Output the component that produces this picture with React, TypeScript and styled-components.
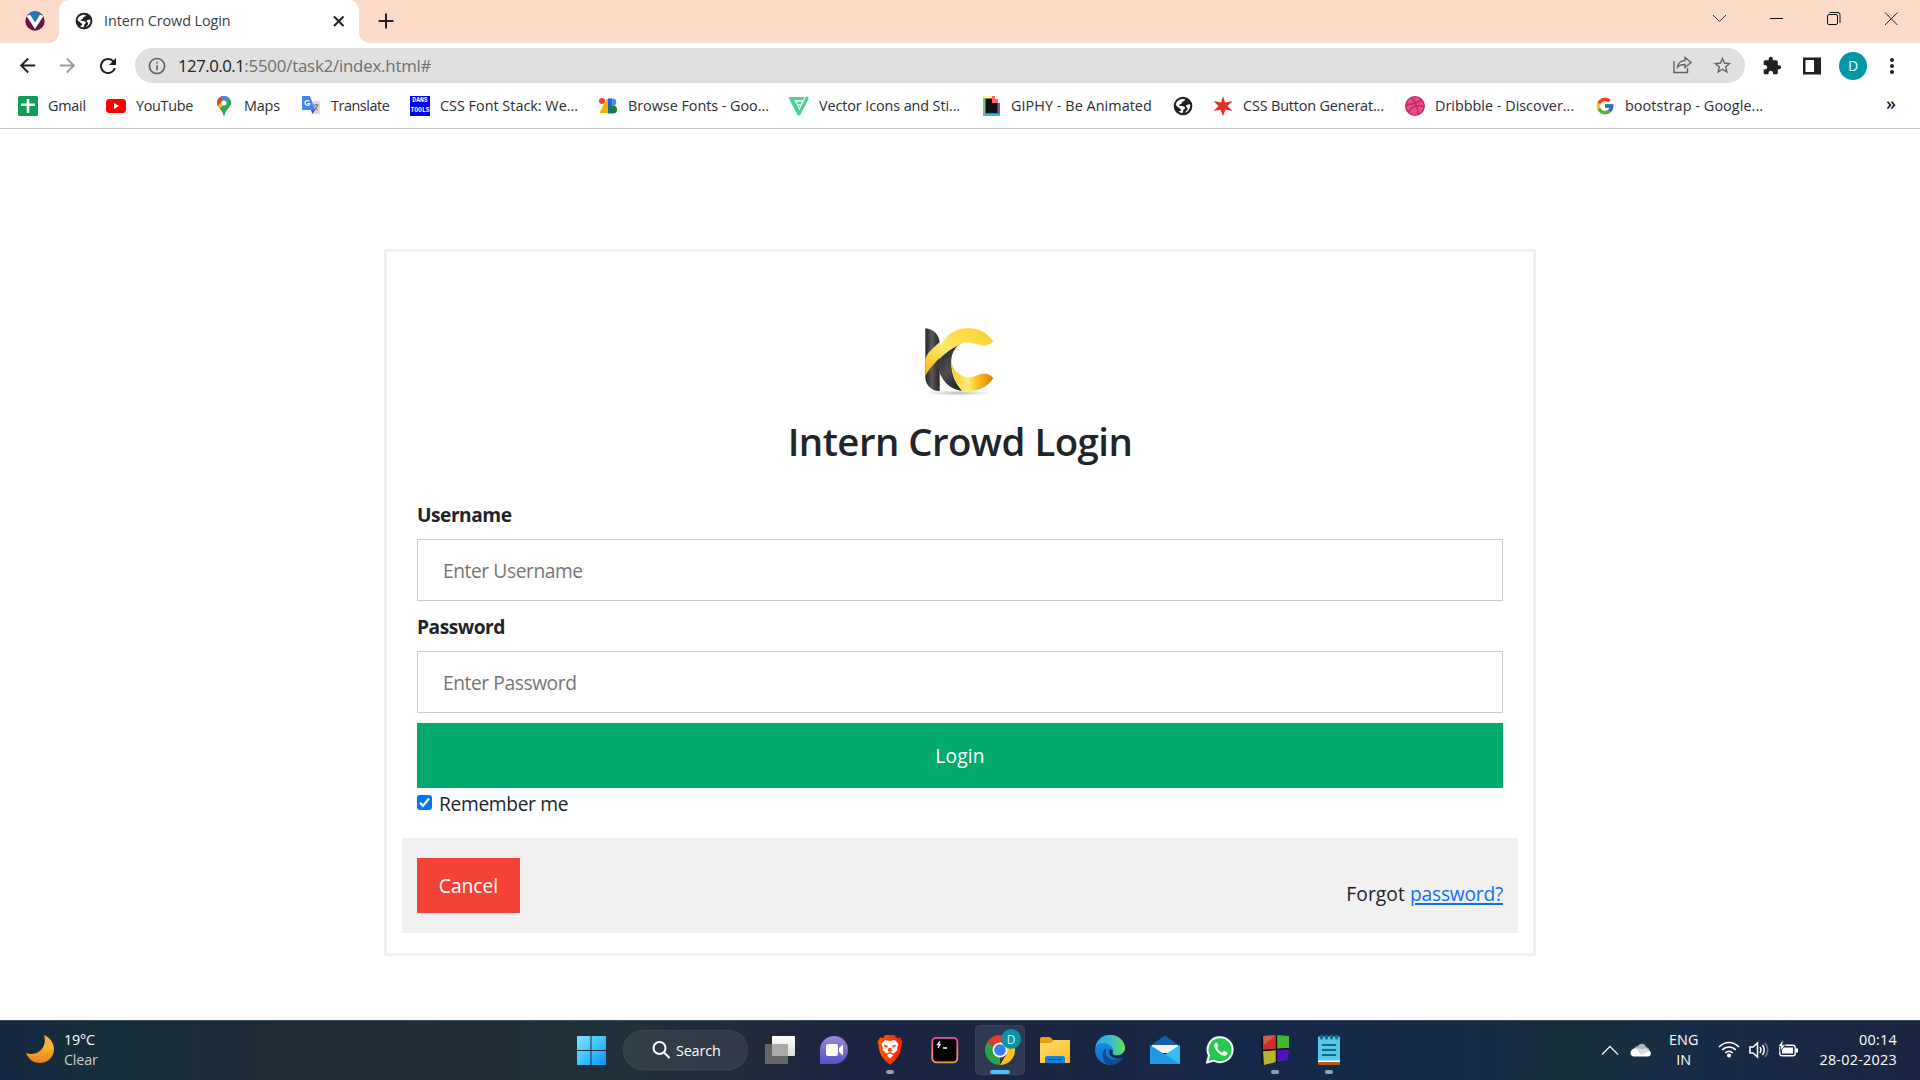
import React from "react";
import styled, { createGlobalStyle } from "styled-components";
import { MdRefresh, MdExtension, MdStarOutline, MdInfoOutline, MdArrowBack, MdArrowForward, MdMoreVert } from "react-icons/md";
import { FcGoogle } from "react-icons/fc";

const Global = createGlobalStyle`
  * { box-sizing: border-box; }
  body { margin: 0; background: #fff; color: #212529; font-family: "Open Sans", "Noto Sans", sans-serif; overflow: hidden; }
  svg { display: block; flex: none; }
`;

const Screen = styled.div`
  width: 1920px;
  height: 1080px;
  display: flex;
  flex-direction: column;
  background: #fff;
`;

/* ---------- browser ---------- */
const TabStrip = styled.header`
  height: 43px;
  display: flex;
  align-items: stretch;
  background: #fddbc8;
`;
const PinnedTab = styled.div`
  width: 59px;
  padding: 11px 0 0 25px;
`;
const ActiveTab = styled.div`
  position: relative;
  width: 300px;
  padding: 0 12px 1px 16px;
  display: flex;
  align-items: center;
  background: #fff;
  border-radius: 10px 10px 0 0;
  &::before, &::after {
    content: "";
    position: absolute;
    bottom: 0;
    width: 10px;
    height: 10px;
  }
  &::before { left: -10px; background: radial-gradient(circle at 0 0, transparent 9.5px, #fff 10px); }
  &::after { right: -10px; background: radial-gradient(circle at 100% 0, transparent 9.5px, #fff 10px); }
`;
const TabTitle = styled.span`
  flex: 1;
  margin: -1px 0 0 11px;
  font-size: 14.4px;
  line-height: 20px;
  letter-spacing: -0.1px;
  color: #3c4043;
`;
const NewTab = styled.div`
  flex: 1;
  padding: 13px 0 0 19px;
`;
const WindowButtons = styled.div`
  display: flex;
  gap: 35px;
  padding: 7px 17px 0 0;
`;

const Toolbar = styled.div`
  height: 47px;
  display: flex;
  align-items: center;
  padding: 0 16px 2px;
  color: #202124;
`;
const NavButtons = styled.div`
  width: 119px;
  display: flex;
  gap: 17px;
`;
const AddressBar = styled.div`
  width: 1610px;
  height: 35px;
  display: flex;
  align-items: center;
  padding: 0 12px;
  border-radius: 18px;
  background: #e0e0e0;
  color: #5f6368;
`;
const Url = styled.span`
  flex: 1;
  margin-left: 11px;
  font-size: 16.8px;
  line-height: 24px;
  letter-spacing: -0.18px;
  color: #6b6e72;
  b { font-weight: 400; color: #202124; letter-spacing: -0.5px; }
`;
const AddressActions = styled.div`
  display: flex;
  gap: 19px;
`;
const Extensions = styled.div`
  flex: 1;
  display: flex;
  align-items: center;
  gap: 17px;
  padding-left: 17px;
`;
const PanelIcon = styled.svg`
  margin-left: 3px;
`;
const MenuIcon = styled(MdMoreVert)`
  margin-left: -4px;
`;
const Avatar = styled.div`
  width: 28px;
  height: 28px;
  border-radius: 50%;
  background: #0097a7;
  color: #fff;
  font-size: 14px;
  line-height: 27px;
  text-align: center;
`;

const Bookmarks = styled.nav`
  height: 39px;
  display: flex;
  align-items: center;
  padding: 0 0 6px 18px;
  border-bottom: 1px solid #c9cacb;
`;
const Bookmark = styled.a<{ $w: number; $ls?: number }>`
  width: ${(p) => p.$w}px;
  display: flex;
  align-items: center;
  gap: 10px;
  font-size: 14.4px;
  line-height: 20px;
  letter-spacing: ${(p) => p.$ls ?? 0}px;
  white-space: nowrap;
  color: #2c2e31;
`;
const More = styled.span`
  margin: -6px 24px 0 auto;
  font-size: 18px;
  font-weight: 600;
  line-height: 20px;
`;
const DansTools = styled.span`
  width: 20px;
  height: 20px;
  display: flex;
  flex-direction: column;
  align-items: center;
  background: #00f;
  color: #fff;
  font: 700 6.4px/10px "Liberation Mono", monospace;
  letter-spacing: 0;
`;

/* ---------- login page ---------- */
const Page = styled.main`
  flex: 1;
  padding: 120px 384px 0;
`;
const Card = styled.section`
  height: 707px;
  padding: 73px 15px 0;
  border: 3px solid #f1f1f1;
  display: flex;
  flex-direction: column;
`;
const Brand = styled.div`
  height: 174px;
  display: flex;
  flex-direction: column;
  align-items: center;
`;
const Heading = styled.h1`
  margin: 17px 0 0;
  font-size: 38.4px;
  font-weight: 600;
  line-height: 48px;
  letter-spacing: -0.55px;
`;
const Form = styled.div`
  height: 339px;
  padding: 0 15px;
  display: flex;
  flex-direction: column;
`;
const Label = styled.label`
  height: 30px;
  font-size: 19.2px;
  font-weight: 700;
  line-height: 32px;
  letter-spacing: -0.5px;
`;
const Input = styled.input`
  height: 62px;
  margin: 10px 0;
  padding: 0 25px;
  border: 1px solid #ccc;
  background: #fff;
  font: 400 19.2px/30px "Open Sans", sans-serif;
  letter-spacing: -0.42px;
  outline: 0;
  &::placeholder { color: #757575; opacity: 1; }
`;
const LoginButton = styled.button`
  height: 65px;
  padding: 0;
  border: 0;
  background: #04aa6d;
  color: #fff;
  font: 400 19.2px/30px "Open Sans", sans-serif;
  letter-spacing: 0.2px;
`;
const Remember = styled.label`
  display: flex;
  height: 30px;
  gap: 7px;
  font-size: 19.2px;
  line-height: 32px;
  letter-spacing: -0.33px;
`;
const Checkbox = styled.span`
  width: 15px;
  height: 15px;
  margin-top: 7px;
  border-radius: 3px;
  background: #0075ff;
`;
const Footer = styled.footer`
  height: 95px;
  padding: 20px 15px 0;
  display: flex;
  justify-content: space-between;
  background: #f1f1f1;
`;
const CancelButton = styled.button`
  width: 103px;
  height: 55px;
  padding: 1px 0 0;
  border: 0;
  background: #f44336;
  color: #fff;
  font: 400 19.2px/30px "Open Sans", sans-serif;
`;
const Forgot = styled.span`
  margin-top: 21px;
  font-size: 19.2px;
  line-height: 30px;
  letter-spacing: 0.1px;
  a {
    color: #0d6efd;
    letter-spacing: -0.22px;
    text-decoration: underline;
    text-decoration-thickness: 2px;
    text-underline-offset: 2px;
  }
`;

/* ---------- taskbar ---------- */
const Taskbar = styled.footer`
  height: 60px;
  display: grid;
  grid-template-columns: 564px 793px 1fr;
  border-top: 1px solid #3d4c58;
  color: #fff;
  background: linear-gradient(90deg, #14283f 0, #16303c 120px, #212c37 270px, #222c37 400px, #20313a 600px, #222b3a 740px, #1b2542 850px, #1b2540 1000px, #15294a 1320px, #162b44 1480px, #18303a 1570px, #162b47 1700px, #1b2542 1920px);
`;
const Weather = styled.div`
  display: flex;
  padding: 8px 0 0 26px;
  gap: 10px;
`;
const TwoLines = styled.div<{ $align?: string; $ls?: number }>`
  padding-top: 1px;
  font-size: 14.4px;
  line-height: 20px;
  text-align: ${(p) => p.$align ?? "left"};
  letter-spacing: ${(p) => p.$ls ?? 0}px;
  white-space: nowrap;
`;
const Soft = styled.div`
  color: #c8ccd0;
`;
const Apps = styled.div`
  display: flex;
`;
const AppSlot = styled.div<{ $active?: boolean }>`
  position: relative;
  width: 55px;
  height: 59px;
  display: flex;
  flex-direction: column;
  align-items: center;
  padding-top: 13px;
  &::before {
    content: "";
    position: absolute;
    inset: 4px 2px 5px 3px;
    border-radius: 5px;
    background: ${(p) => (p.$active ? "rgba(255,255,255,.09)" : "none")};
    border: ${(p) => (p.$active ? "1px solid rgba(255,255,255,.06)" : "0")};
  }
  svg { position: relative; }
`;
const Indicator = styled.i<{ $wide?: boolean }>`
  position: relative;
  width: ${(p) => (p.$wide ? 20 : 8)}px;
  height: 4px;
  margin-top: 4px;
  border-radius: 2px;
  background: ${(p) => (p.$wide ? "#4cc2ff" : "#98a0ac")};
`;
const SearchPill = styled.div`
  width: 125px;
  height: 40px;
  margin: 9px 5px 0 4px;
  padding-left: 28px;
  display: flex;
  align-items: center;
  gap: 6px;
  border-radius: 20px;
  background: rgba(255, 255, 255, 0.07);
  border: 1px solid rgba(255, 255, 255, 0.05);
  font-size: 14.4px;
  letter-spacing: -0.15px;
`;
const Tray = styled.div`
  display: flex;
  align-items: flex-start;
  justify-content: flex-end;
  padding: 8px 23px 0 0;
`;
const TrayIcons = styled.div<{ $gap: number; $left?: number; $right: number }>`
  display: flex;
  align-items: center;
  height: 42px;
  gap: ${(p) => p.$gap}px;
  margin-left: ${(p) => p.$left ?? 0}px;
  margin-right: ${(p) => p.$right}px;
`;

const Globe = ({ s = 20 }: { s?: number }) => (
  <svg width={s} height={s} viewBox="0 0 20 20">
    <circle cx="10" cy="10" r="9.300" fill="#202124" />
    <path d="M2.800 9 C3.300 5.500 6.200 3 10 3 L12 3.300 C12 5 10.800 5.200 9.600 5.500 C8.800 5.800 9.300 7.200 8.400 7.800 C7.400 8.400 6.500 8.200 6.300 9.200 C6.200 9.900 7.200 10 8.500 10 C10.600 9.900 12 10.800 12 12 C12 13.400 10.500 13.100 10.200 14.100 C10 15.300 10.200 16 9.600 17 C7.900 17 6.600 16.400 5.500 15.500 L8 14.800 C8 13.600 7.700 12.800 6.300 11.900 C5 11 3.600 10.300 2.800 9Z" fill="#fff" />
    <path d="M17.200 9.500 C17.200 13 15 15.800 12 16.800 C12.400 15 14.400 14.700 14.600 13 C14.600 11.600 13.200 11.400 13 10 C12.900 8.900 14.300 8.800 17 8.300Z" fill="#fff" />
  </svg>
);

const Logo = () => (
  <svg width="76" height="75" viewBox="484 76 228 225">
    <defs>
      <linearGradient id="stem"><stop stopColor="#242426" /><stop offset=".45" stopColor="#5b5b5e" /><stop offset="1" stopColor="#262628" /></linearGradient>
      <linearGradient id="leg" x2=".5" y2="1"><stop stopColor="#1e1e20" /><stop offset=".65" stopColor="#4f4f52" /><stop offset="1" stopColor="#2c2c2e" /></linearGradient>
      <linearGradient id="top" x1="0" y1="1" x2="1" y2="0"><stop stopColor="#f9b40f" /><stop offset=".42" stopColor="#ffe768" /><stop offset="1" stopColor="#fdcf28" /></linearGradient>
      <linearGradient id="low"><stop stopColor="#fcc925" /><stop offset=".4" stopColor="#ffec7b" /><stop offset=".65" stopColor="#f8bc1c" /><stop offset="1" stopColor="#e07a04" /></linearGradient>
      <radialGradient id="shade"><stop stopColor="#bbb" /><stop offset="1" stopColor="#fff" /></radialGradient>
    </defs>
    <ellipse cx="592" cy="280" rx="98" ry="8" fill="url(#shade)" />
    <path d="M494 86 C517 87 536 105 537 130 V274 C510 274 494 255 494 232Z" fill="url(#stem)" />
    <path d="M529 186 C548 163 575 143 599 132 C576 148 570 172 572 195 C574 232 588 256 605 273 C567 269 536 242 529 186Z" fill="url(#leg)" />
    <path d="M494 230 C501 212 516 196 534 178 C556 156 583 141 602 132 C630 122 648 138 668 138 C683 138 691 132 698 124 C676 96 650 86 625 86 C580 86 556 108 541 137 L536 127 C518 148 501 154 494 178Z" fill="url(#top)" />
    <path d="M572 188 C578 215 599 232 625 233 C645 233 650 222 668 222 C685 222 692 228 698 236 C680 262 655 274 625 274 C615 274 608 273 603 271 C584 250 574 225 572 188Z" fill="url(#low)" />
  </svg>
);

export default function App() {
  return (
    <Screen>
      <Global />
      <TabStrip>
        <PinnedTab>
          <svg width="20" height="20" viewBox="0 0 20 20">
            <circle cx="10" cy="10" r="9.700" fill="#6b1247" />
            <path d="M4 2.300 A9.700 9.700 0 0 1 16 2.300 L10 13Z" fill="#2178ae" />
            <path d="M1.500 5 L5 3.500 L10 11.500 L15 3.500 L18.500 5 L10 18Z" fill="#fff" />
          </svg>
        </PinnedTab>
        <ActiveTab>
          <Globe s={18} />
          <TabTitle>Intern Crowd Login</TabTitle>
          <svg width="16" height="16" viewBox="0 0 16 16" stroke="#202124" strokeWidth="2"><path d="M3 3.500 L12.500 13 M12.500 3.500 L3 13" /></svg>
        </ActiveTab>
        <NewTab>
          <svg width="16" height="16" viewBox="0 0 16 16" stroke="#202124" strokeWidth="2"><path d="M8 .5 V15.500 M.5 8 H15.500" /></svg>
        </NewTab>
        <WindowButtons>
          <svg width="22" height="23" viewBox="0 0 22 23" fill="none" stroke="#333"><path d="M5 8 L11.500 14.500 L18 8" /></svg>
          <svg width="23" height="23" viewBox="0 0 23 23"><path d="M5 11 H18 V12 H5Z" fill="#111" /></svg>
          <svg width="22" height="23" viewBox="0 0 22 23" fill="none" stroke="#111"><rect x="4.500" y="7.500" width="10" height="10" rx="1.500" /><path d="M6.500 5.500 H15 Q17 5.500 17 7.500 V16" /></svg>
          <svg width="23" height="23" viewBox="0 0 23 23" fill="none" stroke="#222"><path d="M5 5.500 L17.500 18 M17.500 5.500 L5 18" /></svg>
        </WindowButtons>
      </TabStrip>
      <Toolbar>
        <NavButtons>
          <MdArrowBack size={23} />
          <MdArrowForward size={23} color="#9a9b9d" />
          <MdRefresh size={24} />
        </NavButtons>
        <AddressBar>
          <MdInfoOutline size={20} />
          <Url><b>127.0.0.1</b>:5500/task2/index.html#</Url>
          <AddressActions>
            <svg width="21" height="20" viewBox="0 0 21 20" fill="none" stroke="#606367" strokeWidth="1.400"><path d="M2 6 V17.500 H15.500 V13" /><path d="M5.500 12 C6 8 8.500 5.800 13 5.600 V2.400 L19 7.500 L13 12.500 V9.500 C9.500 9.400 7 10.300 5.500 12Z" /></svg>
            <MdStarOutline size={21} />
          </AddressActions>
        </AddressBar>
        <Extensions>
          <MdExtension size={20} />
          <PanelIcon width="20" height="20" viewBox="0 0 20 20"><path d="M1 1.500 H19 V18.500 H1Z M3.500 4 V16 H12 V4Z" fill="#202124" fillRule="evenodd" /></PanelIcon>
          <Avatar>D</Avatar>
          <MenuIcon size={24} />
        </Extensions>
      </Toolbar>
      <Bookmarks>
        <Bookmark $w={88} $ls={-0.25}>
          <svg width="20" height="20" viewBox="0 0 20 20"><rect width="20" height="20" rx="1.500" fill="#0f9d58" /><path d="M8.700 3 H11.300 V7.500 H17 V10 H11.300 V17 H8.700 V10 H3 V7.500 H8.700Z" fill="#fff" /></svg>
          Gmail
        </Bookmark>
        <Bookmark $w={108} $ls={-0.32}>
          <svg width="20" height="20" viewBox="0 0 20 20"><rect y="3" width="20" height="14" rx="3.500" fill="#f00" /><path d="M8 7 L13.200 10 L8 13Z" fill="#fff" /></svg>
          YouTube
        </Bookmark>
        <Bookmark $w={87} $ls={-0.2}>
          <svg width="20" height="20" viewBox="0 0 20 20">
            <clipPath id="pin"><path d="M10 0 C6 0 3 3 3 7 C3 11.500 8.500 13 9.200 19 Q10 20.500 10.800 19 C11.500 13 17 11.500 17 7 C17 3 14 0 10 0Z" /></clipPath>
            <g clipPath="url(#pin)"><path d="M0 0 H20 V20 H0Z" fill="#34a853" /><path d="M2 0 H12 L3 11Z" fill="#ea4335" /><path d="M7 0 H17 L10 7Z" fill="#4285f4" /><path d="M3 11 L9 4 L10 9 L5 14Z" fill="#fbbc04" /><path d="M15 2 L18 7 L11 14 L7 17 L6 13Z" fill="#34a853" /></g>
            <circle cx="10" cy="7" r="2.500" fill="#fff" />
          </svg>
          Maps
        </Bookmark>
        <Bookmark $w={109} $ls={-0.45}>
          <svg width="20" height="20" viewBox="0 0 20 20"><path d="M7 5 H18 Q19 5 19 6 V17 Q19 18 18 18 H11Z" fill="#dcdcdc" /><path d="M2 0 H9 L14 14 H2 Q1 14 1 13 V1 Q1 0 2 0Z" fill="#4285f4" /><path d="M10 14 H14 L11.500 18Z" fill="#2459b8" /><path d="M8.300 5.500 A2.400 2.400 0 1 0 8.700 7.700 H6.400" fill="none" stroke="#fff" strokeWidth="1.200" /><path d="M12.500 9 H17.500 M15 8 V9 M16.500 9 C16 12 14 14 12.800 14.600 M13.500 10.500 C14.500 12.500 16 14 17 14.500" fill="none" stroke="#667" /></svg>
          Translate
        </Bookmark>
        <Bookmark $w={188}><DansTools><span>DANS</span><span>TOOLS</span></DansTools>CSS Font Stack: We...</Bookmark>
        <Bookmark $w={191} $ls={-0.04}>
          <svg width="20" height="20" viewBox="0 0 20 20"><circle cx="4" cy="5" r="3" fill="#ea4335" /><path d="M8.500 3 H12 V17 H1.500 Z" fill="#f9ab00" /><path d="M10 2.500 H14.500 V17.500 H10Z" fill="#1967d2" /><path d="M14.500 2.500 A3.700 3.700 0 0 1 14.500 10Z" fill="#4285f4" /><circle cx="15" cy="13.500" r="4" fill="#188038" /></svg>
          Browse Fonts - Goo...
        </Bookmark>
        <Bookmark $w={192} $ls={-0.1}>
          <svg width="20" height="20" viewBox="0 0 20 20"><path d="M0 1 H15.500 L14 4.200 H5.500 L10.500 14 L16.500 1.500 Q17.500 0 19 1 Q20 2 19.300 3.500 L11.500 18.500 Q9.800 20.500 8.200 18.500 L.5 3.500 Q-.3 2 0 1Z M7.500 5.800 H13 L11.800 8.300 H8.800Z M9 9.500 H11.500 L10.400 12Z" fill="#4ad295" /></svg>
          Vector Icons and Sti...
        </Bookmark>
        <Bookmark $w={192} $ls={0.05}>
          <svg width="20" height="20" viewBox="0 0 20 20"><path d="M2 0 H11 V3 H2Z" fill="#fff79a" /><path d="M2 2 H5 V18 H2Z" fill="#7bc98f" /><path d="M16 7 H19 V18 H16Z" fill="#8052c8" /><path d="M2 17.500 H19 V20 H2Z" fill="#22bdf2" /><path d="M4.500 2.500 H11 V7 H16.500 V17.500 H4.500Z" fill="#111" /><path d="M11 0 H14 V3 H17 V7 H11Z" fill="#f66" /></svg>
          GIPHY - Be Animated
        </Bookmark>
        <Bookmark $w={40}><Globe /></Bookmark>
        <Bookmark $w={192} $ls={-0.15}>
          <svg width="20" height="20" viewBox="0 0 20 20"><path d="M10 0 L12 6.500 L19.500 5 L14.500 10 L19.500 15 L12.500 13.800 L10 20 L7.500 13.800 L.5 15 L5.500 10 L.5 5 L8 6.500Z" fill="#e03127" /></svg>
          CSS Button Generat...
        </Bookmark>
        <Bookmark $w={190}>
          <svg width="20" height="20" viewBox="0 0 20 20"><circle cx="10" cy="10" r="9.300" fill="#ea4c89" stroke="#c32361" strokeWidth="1.300" /><path d="M6.500 1.500 C10 5.500 12.500 11 13.500 18.500 M1 8.500 C7 8.500 13 7.500 16.500 3.500 M3.500 16.500 C6.500 10.500 12 8.500 19 10.500" fill="none" stroke="#c32361" strokeWidth="1.400" /></svg>
          Dribbble - Discover...
        </Bookmark>
        <Bookmark $w={180} $ls={0.07}><FcGoogle size={20} />bootstrap - Google...</Bookmark>
        <More>»</More>
      </Bookmarks>

      <Page>
        <Card>
          <Brand>
            <Logo />
            <Heading>Intern Crowd Login</Heading>
          </Brand>
          <Form>
            <Label>Username</Label>
            <Input placeholder="Enter Username" />
            <Label>Password</Label>
            <Input type="password" placeholder="Enter Password" />
            <LoginButton>Login</LoginButton>
            <Remember>
              <Checkbox><svg width="15" height="15" viewBox="0 0 15 15" fill="none" stroke="#fff" strokeWidth="2.200"><path d="M3 7.800 L6 10.800 L12 3.500" /></svg></Checkbox>
              Remember me
            </Remember>
          </Form>
          <Footer>
            <CancelButton>Cancel</CancelButton>
            <Forgot>Forgot <a>password?</a></Forgot>
          </Footer>
        </Card>
      </Page>

      <Taskbar>
        <Weather>
          <svg width="28" height="42" viewBox="0 0 28 42"><defs><linearGradient id="moon" x2="0" y2="1"><stop stopColor="#f3b13c" /><stop offset=".4" stopColor="#f5b833" /><stop offset="1" stopColor="#f07a1d" /></linearGradient></defs><path d="M18 6 C25 9 28 15 28 20 C28 28 22 34 14 34 C8 34 3 31 0 24 C11 28 22 19 18 6Z" fill="url(#moon)" /></svg>
          <TwoLines $ls={-0.2}>19°C<Soft>Clear</Soft></TwoLines>
        </Weather>
        <Apps>
          <AppSlot><svg width="30" height="32" viewBox="0 0 30 32"><defs><linearGradient id="win" x2="1" y2="1"><stop stopColor="#86e2ff" /><stop offset=".5" stopColor="#3dc3fc" /><stop offset="1" stopColor="#0a94fa" /></linearGradient></defs><path d="M1 2 H14.500 V16 H1Z M15.500 2 H30 V16 H15.500Z M1 17 H14.500 V31 H1Z M15.500 17 H30 V31 H15.500Z" fill="url(#win)" /></svg></AppSlot>
          <SearchPill><svg width="18" height="18" viewBox="0 0 18 18" fill="none" stroke="#fff" strokeWidth="2"><circle cx="7.500" cy="7" r="6" /><path d="M12 11.500 L17.500 17" /></svg>Search</SearchPill>
          <AppSlot><svg width="32" height="32" viewBox="1 0 32 32"><defs><linearGradient id="tv" x2="0" y2="1"><stop stopColor="#fff" /><stop offset="1" stopColor="#ddd" /></linearGradient></defs><rect x="9" y="2" width="23" height="20" rx="1" fill="url(#tv)" /><rect x="2" y="10" width="23" height="20" rx="1" fill="#666" /><rect x="9" y="10" width="16" height="12" fill="#aaa" /></svg></AppSlot>
          <AppSlot><svg width="30" height="32" viewBox="1 0 30 32"><defs><linearGradient id="chat" x2="0" y2="1"><stop stopColor="#9b87d8" /><stop offset="1" stopColor="#5552c9" /></linearGradient></defs><path d="M1 30 V16 A14 14 0 1 1 15 30Z" fill="url(#chat)" /><rect x="7" y="10" width="12" height="12" rx="2" fill="#fff" /><path d="M20 14 L24 10.500 V21.500 L20 18Z" fill="#fff" /></svg></AppSlot>
          <AppSlot>
            <svg width="28" height="32" viewBox="0 0 28 32"><defs><linearGradient id="brave"><stop stopColor="#ff5b00" /><stop offset="1" stopColor="#fa1f05" /></linearGradient></defs><path d="M7 4 L9.500 1 H18.500 L21 4 L24 3.500 L26.500 8 L25.500 11 C25 19 22 25 14 30.500 C6 25 3 19 2.500 11 L1.500 8 L4 3.500Z" fill="url(#brave)" /><path d="M9 6 L14 7 L19 6 L22.500 10 L21 14.500 L21.500 16 L17.500 19.500 L14 18 L10.500 19.500 L6.500 16 L7 14.500 L5.500 10Z" fill="#fff" /><path d="M10.500 21 L14 19.500 L17.500 21 L14 24.500Z" fill="#fff" /><path d="M8 10.800 L12 11.800 L11.200 13.700 L8.600 13Z M20 10.800 L16 11.800 L16.800 13.700 L19.400 13Z M11.500 17 L12.500 14 H15.500 L16.500 17 L14 18Z" fill="#fb4b12" /></svg>
            <Indicator />
          </AppSlot>
          <AppSlot><svg width="28" height="32" viewBox="0 0 28 32"><defs><linearGradient id="term" x2="0" y2="1"><stop stopColor="#f04ca6" /><stop offset="1" stopColor="#f0a24c" /></linearGradient></defs><rect x="1.300" y="3.800" width="25" height="24.500" rx="4" fill="#000" stroke="url(#term)" strokeWidth="1.800" /><path d="M9 7.500 L6.500 10.500 H9 L7 14 M12 14 H16" fill="none" stroke="#fff" strokeWidth="1.300" /></svg></AppSlot>
          <AppSlot $active>
            <svg width="44" height="32" viewBox="0 0 44 32" overflow="visible"><path d="M22 16 L9 8.500 A15 15 0 0 1 35 8.500Z" fill="#e33b2e" /><path d="M22 16 L22 31 A15 15 0 0 1 9 8.500Z" fill="#2c9f4b" /><path d="M35 8.500 H22 V16 L28.500 20 L22 31 A15 15 0 0 0 35 8.500Z" fill="#fcc31e" /><circle cx="22" cy="16" r="7.500" fill="#fff" /><circle cx="22" cy="16" r="5.800" fill="#3b7ded" /><circle cx="33" cy="5" r="10" fill="#0b93a3" /><text x="33" y="9.500" textAnchor="middle" fontSize="12" fill="#d5f0f2">D</text></svg>
            <Indicator $wide />
          </AppSlot>
          <AppSlot><svg width="30" height="32" viewBox="0 0 30 32"><defs><linearGradient id="fold" x2="1" y2="1"><stop stopColor="#ffdc6d" /><stop offset="1" stopColor="#fcbd26" /></linearGradient></defs><path d="M0 5 Q0 3 2 3 H10 L13 6 H18 V12 H0Z" fill="#e6a20a" /><path d="M0 9 H11 L14 6 H30 V29 H0Z" fill="url(#fold)" /><path d="M5 29 V24 Q5 22 7 22 H23 Q25 22 25 24 V29Z" fill="#1282d7" /><path d="M8 25.500 H22" stroke="#074f91" /></svg></AppSlot>
          <AppSlot><svg width="30" height="32" viewBox="0 0 30 32"><defs><linearGradient id="edgeTop"><stop stopColor="#2ba9e8" /><stop offset=".55" stopColor="#35c1c9" /><stop offset="1" stopColor="#6be04f" /></linearGradient><linearGradient id="edgeLow" x2="0" y2="1"><stop stopColor="#1893df" /><stop offset="1" stopColor="#0b70d0" /></linearGradient></defs><circle cx="15" cy="16" r="15" fill="url(#edgeLow)" /><path d="M.5 13 C2 5 8 1 15 1 C24 1 30 7 30 14 C30 19 26 21 22 21 C18 21 17 19.500 18 18 C19 13 13 9 8 9 C4 9 1.500 11 .5 13Z" fill="url(#edgeTop)" /><path d="M11 17 C10 24 17 28 27.500 24 C24 30 18 31.500 13 30.500 C6 27 6 17 11 14Z" fill="#134b91" /><path d="M18 17 C16.500 20 18 22 23 21.500 C27 21 29 18 30 16 L30 22 L27.500 24 C18 26 12 21 15 15Z" fill="#1b2642" /></svg></AppSlot>
          <AppSlot><svg width="30" height="32" viewBox="0 0 30 32"><path d="M0 12 L15 1.500 L30 12 V17 H0Z" fill="#0e5fb0" /><path d="M2 11 H28 V19 H2Z" fill="#f4f4f4" /><path d="M30 11 L0 30 H30Z" fill="#37bef0" /><path d="M0 11 L15 20.500 L30 30 H0Z" fill="#2297e4" /></svg></AppSlot>
          <AppSlot><svg width="28" height="32" viewBox="0 0 28 32"><path d="M1 28.500 L3 21.500 A12.500 12.500 0 1 1 8 26.600Z" fill="#25c84d" stroke="#fff" strokeWidth="2" /><path d="M10 8.500 C8 9.500 7.500 12 9 14.500 C11.500 19 15 21.500 18.500 21.800 C20.500 21.800 22 20 21.500 18.500 L18 16.800 L16.300 18.500 C13.500 17.500 12 15.500 11 13.500 L12.300 12 L11.300 8.800Z" fill="#fff" /></svg></AppSlot>
          <AppSlot>
            <svg width="30" height="32" viewBox="0 0 30 32"><path d="M3 2 L16 1 V15 L3 16Z" fill="#cf2d25" /><path d="M17 1 L29 2 V14 L17 15Z" fill="#42b72f" /><path d="M3 17 L16 16 V28 L4 31Z" fill="#b5b42c" /><path d="M17 16 L29 15 L28 26 L17 28Z" fill="#4c15b8" /><path d="M3 2 L16 1 L4 11Z" fill="#fff" opacity=".2" /><path d="M2 2 V31 M16.500 1 V29 M2 16.500 L29 14.500" stroke="#111" strokeWidth="1.400" /></svg>
            <Indicator />
          </AppSlot>
          <AppSlot>
            <svg width="28" height="32" viewBox="0 0 28 32"><rect x="3" y="2.500" width="22" height="25.500" rx="1" fill="#58c6e4" /><path d="M3 26.500 H25 V28 H3Z" fill="#fff" /><path d="M3 28 H25 V30 Q25 31 24 31 H4 Q3 31 3 30Z" fill="#b65a1b" /><path d="M7 11 H21 M7 16 H21 M7 21 H21" stroke="#0b6b8d" strokeWidth="2" /><path d="M6.500 2 V4 M11.500 2 V4 M16.500 2 V4 M21.500 2 V4" stroke="#0b6b8d" strokeWidth="3" strokeLinecap="round" /></svg>
            <Indicator />
          </AppSlot>
        </Apps>
        <Tray>
          <TrayIcons $gap={11} $right={18}>
            <svg width="18" height="20" viewBox="0 0 18 20" fill="none" stroke="#eee" strokeWidth="1.300"><path d="M1 14.500 L9 6.500 L17 14.500" /></svg>
            <svg width="21" height="16" viewBox="0 0 21 16"><path d="M3 9 C4 5 7 4 8 4 C10 0 16 2 16 5 C20 6 20 10 19 11Z" fill="#aeb7c1" /><path d="M.5 11 C.5 8 3 6 6 6.500 L20 9 C22 12 20 14.500 18 14.500 H4 C2 14.500 .5 13 .5 11Z" fill="#fff" /><path d="M6 6.500 C8 6 10 7 11 8 L15 6 L20 9 L11 13Z" fill="#d9dde1" /></svg>
          </TrayIcons>
          <TwoLines $align="center">ENG<div>IN</div></TwoLines>
          <TrayIcons $gap={9} $left={20} $right={20}>
            <svg width="22" height="20" viewBox="-1 0 22 20" fill="none" stroke="#fff" strokeWidth="1.700"><path d="M0 7 C6 1 14 1 20 7 M3.200 10 C7 6 13 6 16.800 10 M6.300 13 C8.500 10.800 11.500 10.800 13.700 13" /><circle cx="10" cy="15.500" r="1.200" fill="#fff" /></svg>
            <svg width="20" height="20" viewBox="0 0 20 20" fill="none" stroke="#fff" strokeWidth="1.500"><path d="M1 7 H4 L8.500 3 V17 L4 13 H1Z M11 7 Q13 10 11 13 M13.500 5 Q17 10 13.500 15" /><path d="M16 3 Q21.500 10 16 17" stroke="#72808f" /></svg>
            <svg width="21" height="20" viewBox="0 0 21 20"><rect x="1.800" y="5.300" width="15.400" height="10.400" rx="2.300" fill="none" stroke="#fff" strokeWidth="1.400" /><path d="M4 7.500 H15 V13.500 H4Z M18 8.500 H20 V12.500 H18Z" fill="#fff" /><path d="M5 0 L0 6.500 H2.800 L2 11.500 L7.500 5 H4.500 L5.500 0Z" fill="#fff" stroke="#162b47" strokeWidth=".8" /></svg>
          </TrayIcons>
          <TwoLines $align="right" $ls={0.25}>00:14<div>28-02-2023</div></TwoLines>
        </Tray>
      </Taskbar>
    </Screen>
  );
}
